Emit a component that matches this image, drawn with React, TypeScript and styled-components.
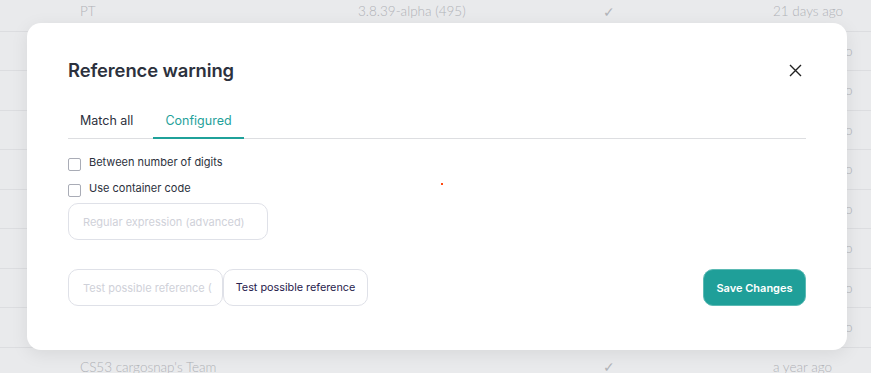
import React from "react";
import styled, { createGlobalStyle } from "styled-components";

const GlobalStyle = createGlobalStyle`
    html, body {
        margin: 0;
        padding: 0;
        width: 871px;
        height: 373px;
        overflow: hidden;
        font-family: "Inter", "Noto Sans", sans-serif;
    }
`;

const Page = styled.div`
    position: relative;
    width: 871px;
    height: 373px;
    overflow: hidden;
    background: #e9eaec;
`;

const Table = styled.div`
    margin-top: -8px;
`;

const Row = styled.div`
    display: grid;
    grid-template-columns: 80px 278px 245px 170px 1fr;
    align-items: center;
    height: 39.5px;
    border-bottom: 1px solid #dcdde0;
    box-sizing: border-box;
    font-family: "Lato", sans-serif;
    font-weight: 300;
    font-size: 13.5px;
    color: #b1b3b8;

    .check {
        font-size: 14px;
    }
`;

const Overlay = styled.div`
    position: absolute;
    inset: 0;
    display: flex;
    justify-content: center;
    padding-top: 23px;
`;

const Modal = styled.div`
    position: relative;
    width: 820px;
    height: 327px;
    box-sizing: border-box;
    background: #ffffff;
    border-radius: 14px;
    box-shadow: 0 4px 18px rgba(0, 0, 0, 0.08);
    padding: 34px 41px 0 41px;
    margin-left: 3px;
`;

const Header = styled.div`
    display: flex;
    align-items: center;
    justify-content: space-between;
    height: 26px;
`;

const Title = styled.h2`
    margin: 0;
    font-size: 18.4px;
    font-weight: 600;
    color: #2c313d;
    letter-spacing: -0.1px;
`;

const CloseButton = styled.button`
    display: flex;
    align-items: center;
    justify-content: center;
    width: 24px;
    height: 24px;
    margin-right: -1px;
    padding: 0;
    border: none;
    background: none;
`;

const Tabs = styled.div`
    display: flex;
    margin-top: 20px;
    border-bottom: 1px solid #dddee1;
`;

const Tab = styled.div<{ $active?: boolean }>`
    padding: 10px 12px 8px;
    font-size: 12.5px;
    line-height: 16px;
    color: ${p => (p.$active ? "#1fa19a" : "#2c313d")};
    border-bottom: 2px solid ${p => (p.$active ? "#1fa19a" : "transparent")};
    margin-bottom: -1px;
    margin-right: 8px;
`;

const Options = styled.div`
    display: flex;
    flex-direction: column;
    gap: 10px;
    margin-top: 16px;
`;

const CheckRow = styled.label`
    display: flex;
    align-items: flex-start;
    gap: 8px;
    font-size: 11px;
    line-height: 14px;
    color: #2c313d;
`;

const Box = styled.span`
    width: 11px;
    height: 11px;
    margin-top: 3px;
    border: 1px solid #a9acb6;
    border-radius: 2px;
    flex-shrink: 0;
`;

const Input = styled.input<{ $width: number }>`
    width: ${p => p.$width}px;
    height: 37px;
    box-sizing: border-box;
    border: 1px solid #dfe1e8;
    border-radius: 10px;
    padding: 0 10px 0 14px;
    font-family: inherit;
    font-size: 11px;
    color: #2c313d;
    outline: none;

    &::placeholder {
        color: #cfd1d9;
    }
`;

const RegexInput = styled(Input)`
    margin-top: 6px;
`;

const Footer = styled.div`
    display: flex;
    align-items: center;
    margin-top: 29px;
`;

const TestButton = styled.button`
    height: 37px;
    width: 145px;
    padding: 0;
    border: 1px solid #dfe1e8;
    border-radius: 10px;
    background: #ffffff;
    font-family: inherit;
    font-size: 10.8px;
    color: #27214c;
`;

const SaveButton = styled.button`
    margin-left: auto;
    height: 37px;
    width: 103px;
    border: 1px solid #5bbab4;
    border-radius: 10px;
    background: #1f9f99;
    font-family: inherit;
    font-size: 11px;
    font-weight: 600;
    color: #ffffff;
`;

const Dot = styled.span`
    position: absolute;
    left: 414px;
    top: 160px;
    width: 2px;
    height: 2px;
    background: #ff4a12;
`;

const rows = [
    ["PT", "3.8.39-alpha (495)", "✓", "21 days ago"],
    ["", "", "", "2 months ago"],
    ["", "", "", "2 months ago"],
    ["", "", "", "2 months ago"],
    ["", "", "", "2 months ago"],
    ["", "", "", "2 months ago"],
    ["", "", "", "2 months ago"],
    ["", "", "", "2 months ago"],
    ["", "", "", "2 months ago"],
    ["CS53 cargosnap's Team", "", "✓", "a year ago"],
];

const App = () => {
    return (
        <Page>
            <GlobalStyle />
            <Table>
                {rows.map((r, i) => (
                    <Row key={i}>
                        <span />
                        <span>{r[0]}</span>
                        <span>{r[1]}</span>
                        <span className="check">{r[2]}</span>
                        <span>{r[3]}</span>
                    </Row>
                ))}
            </Table>
            <Overlay>
                <Modal>
                    <Header>
                        <Title>Reference warning</Title>
                        <CloseButton>
                            <svg width="13" height="13" viewBox="0 0 13 13">
                                <path
                                    d="M1 1L12 12M12 1L1 12"
                                    stroke="#222"
                                    strokeWidth="1.4"
                                />
                            </svg>
                        </CloseButton>
                    </Header>
                    <Tabs>
                        <Tab>Match all</Tab>
                        <Tab $active>Configured</Tab>
                    </Tabs>
                    <Options>
                        <CheckRow>
                            <Box />
                            Between number of digits
                        </CheckRow>
                        <CheckRow>
                            <Box />
                            Use container code
                        </CheckRow>
                    </Options>
                    <RegexInput
                        $width={200}
                        placeholder="Regular expression (advanced)"
                    />
                    <Footer>
                        <Input
                            $width={155}
                            placeholder="Test possible reference (RegEx)"
                        />
                        <TestButton>Test possible reference</TestButton>
                        <SaveButton>Save Changes</SaveButton>
                    </Footer>
                    <Dot />
                </Modal>
            </Overlay>
        </Page>
    );
};

export default App;
